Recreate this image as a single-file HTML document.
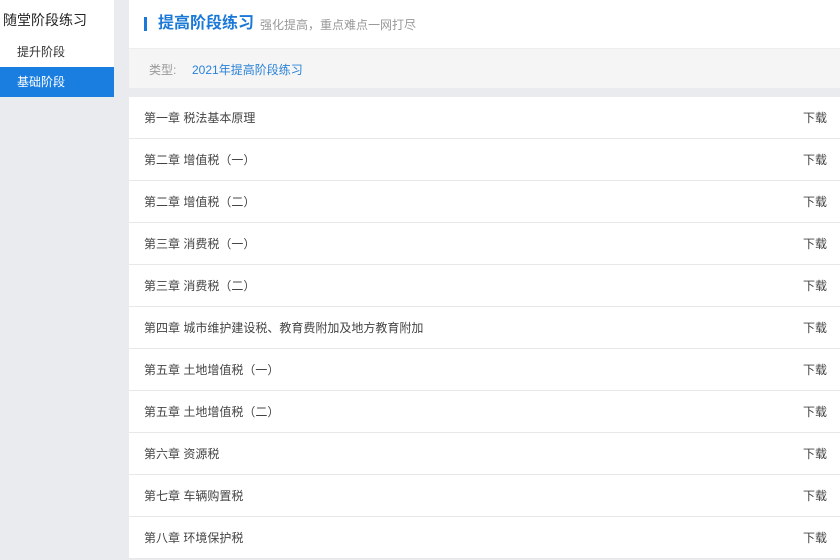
<!DOCTYPE html>
<html><head><meta charset="utf-8"><style>
*{margin:0;padding:0;box-sizing:border-box}
body{width:840px;height:548px;overflow:hidden;background:#e9ebee;font-family:"Liberation Sans","Noto Sans CJK SC",sans-serif;position:relative}
.side{position:absolute;left:0;top:0;width:114px;height:96px;background:#fff}
.side .t{position:absolute;left:3px;top:10px;font-size:14px;color:#222}
.side .i{position:absolute;left:0;width:114px;height:30px;line-height:30px;padding-left:17px;font-size:12px;color:#333}
.side .a{background:#1a7ee0;color:#fff}
.main{position:absolute;left:129px;top:0;width:711px;height:548px}
.hd{height:48px;background:#fff;position:relative}
.bar{position:absolute;left:15px;top:17px;width:3px;height:14px;background:#1a78d6}
.ht{position:absolute;left:29px;top:13px;font-size:16px;color:#1a78d6;font-weight:bold;line-height:22px}
.hs{position:absolute;left:131px;top:17px;font-size:12px;color:#999;line-height:16px}
.fb{height:40px;background:#f5f5f5;border-top:1px solid #eee;position:relative;font-size:12px}
.fb .l{position:absolute;left:20px;top:12px;color:#999}
.fb .v{position:absolute;left:63px;top:12px;color:#2a82d8}
.list{position:absolute;top:97px;left:0;width:711px;background:#fff}
.r{height:42px;border-bottom:1px solid #e8e8e8;position:relative;font-size:12px;color:#444;line-height:43px;padding-left:15px}
.r span{position:absolute;right:13px;top:0}
</style></head><body>
<div class="side"><div class="t">随堂阶段练习</div><div class="i" style="top:37px">提升阶段</div><div class="i a" style="top:67px">基础阶段</div></div>
<div class="main">
<div class="hd"><div class="bar"></div><div class="ht">提高阶段练习</div><div class="hs">强化提高，重点难点一网打尽</div></div>
<div class="fb"><span class="l">类型:</span><span class="v">2021年提高阶段练习</span></div>
<div class="list">
<div class="r">第一章 税法基本原理<span>下载</span></div>
<div class="r">第二章 增值税（一）<span>下载</span></div>
<div class="r">第二章 增值税（二）<span>下载</span></div>
<div class="r">第三章 消费税（一）<span>下载</span></div>
<div class="r">第三章 消费税（二）<span>下载</span></div>
<div class="r">第四章 城市维护建设税、教育费附加及地方教育附加<span>下载</span></div>
<div class="r">第五章 土地增值税（一）<span>下载</span></div>
<div class="r">第五章 土地增值税（二）<span>下载</span></div>
<div class="r">第六章 资源税<span>下载</span></div>
<div class="r">第七章 车辆购置税<span>下载</span></div>
<div class="r">第八章 环境保护税<span>下载</span></div>
</div></div>
</body></html>
